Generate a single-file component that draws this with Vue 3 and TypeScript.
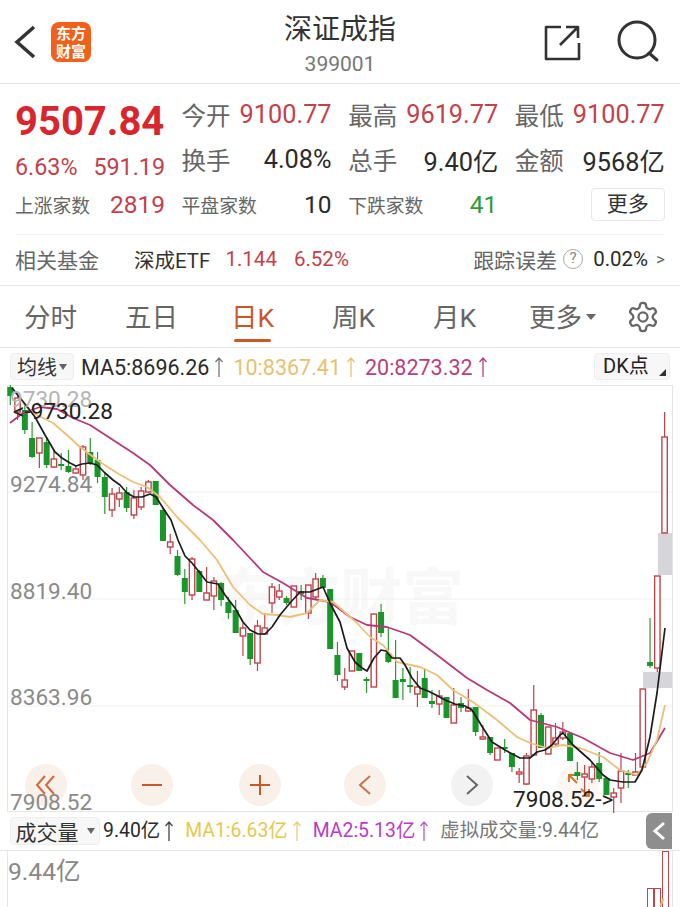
<script setup lang="ts">
import { computed } from 'vue'

type Candle = ['r' | 'g', number, number, number, number]

// wick top, body top, body bottom, wick bottom (page y)
const candles: Candle[] = [
  ['g', 385, 387, 396, 405], ['r', 392, 398, 412, 420], ['g', 405, 410, 430, 434], ['g', 422, 438, 457, 458],
  ['r', 438, 438, 453, 468], ['g', 437, 442, 465, 468], ['r', 450, 459, 467, 468], ['g', 453, 464, 466, 470],
  ['g', 450, 466, 472, 473], ['r', 465, 469, 473, 474], ['r', 445, 447, 475, 480], ['g', 438, 452, 463, 465],
  ['g', 452, 460, 477, 483], ['g', 472, 477, 497, 514], ['r', 488, 494, 510, 517], ['r', 487, 493, 499, 507],
  ['g', 487, 492, 508, 512], ['r', 490, 498, 515, 519], ['r', 487, 491, 507, 510], ['r', 480, 482, 492, 493],
  ['g', 481, 481, 505, 505], ['g', 508, 510, 541, 541], ['r', 534, 542, 547, 554], ['g', 550, 556, 575, 576],
  ['g', 569, 578, 592, 604], ['r', 557, 559, 595, 600], ['g', 570, 571, 592, 592], ['r', 567, 593, 600, 600],
  ['r', 577, 581, 596, 610], ['g', 582, 583, 600, 606], ['g', 597, 602, 613, 619], ['g', 600, 610, 633, 633],
  ['r', 623, 628, 636, 656], ['g', 633, 633, 659, 665], ['r', 620, 626, 663, 671], ['r', 613, 628, 634, 635],
  ['r', 583, 587, 603, 613], ['r', 584, 591, 597, 600], ['g', 596, 598, 603, 605], ['r', 586, 586, 607, 607],
  ['g', 585, 591, 594, 600], ['r', 585, 585, 613, 619], ['r', 573, 579, 597, 600], ['g', 575, 578, 588, 588],
  ['g', 589, 589, 649, 649], ['g', 642, 655, 675, 681], ['r', 668, 680, 687, 690], ['r', 651, 651, 671, 671],
  ['g', 653, 653, 671, 671], ['g', 677, 679, 681, 693], ['r', 614, 614, 687, 687], ['g', 604, 612, 633, 637],
  ['g', 628, 653, 662, 663], ['g', 640, 680, 698, 698], ['g', 668, 679, 682, 700], ['g', 667, 685, 686, 693],
  ['r', 671, 687, 694, 707], ['g', 668, 678, 698, 698], ['g', 690, 701, 704, 708], ['r', 690, 696, 704, 715],
  ['g', 697, 697, 718, 718], ['r', 688, 705, 723, 723], ['g', 697, 703, 708, 712], ['r', 689, 708, 711, 712],
  ['g', 707, 707, 732, 736], ['r', 725, 737, 739, 740], ['g', 737, 737, 753, 755], ['r', 748, 748, 760, 760],
  ['g', 739, 747, 749, 753], ['g', 753, 753, 767, 772], ['r', 768, 772, 774, 783], ['r', 753, 756, 784, 785],
  ['r', 685, 710, 755, 755], ['g', 713, 715, 748, 748], ['r', 727, 727, 754, 754], ['r', 723, 738, 744, 747],
  ['r', 722, 732, 738, 740], ['g', 733, 733, 761, 761], ['g', 762, 772, 776, 780], ['r', 765, 774, 777, 795],
  ['r', 763, 767, 779, 783], ['g', 752, 763, 779, 782], ['g', 778, 778, 795, 795], ['r', 788, 793, 797, 813],
  ['r', 753, 771, 788, 803], ['g', 770, 773, 774, 788], ['r', 753, 772, 775, 775], ['r', 689, 689, 767, 767],
  ['g', 618, 662, 666, 668], ['r', 576, 576, 668, 672], ['r', 412, 437, 533, 533],
]

const bars = computed(() =>
  candles.map((c, i) => ({
    x: 10.3 + i * 7.27,
    up: c[0] === 'r',
    wickTop: c[1],
    top: c[2],
    bottom: Math.max(c[3], c[2] + 2),
    wickBottom: c[4],
  })),
)

const ma5 = '12,388 25,404 35,417 45,435 55,452 62,458 70,463 76,466 82,464 90,463 97,465 105,473 113,480 120,485 127,493 134,497 142,497 150,494 156,497 163,508 171,520 178,540 185,556 192,563 200,573 207,582 218,584 225,595 235,608 243,622 250,630 258,634 265,634 272,627 280,615 290,603 300,592 310,592 323,587 331,605 340,622 347,648 355,662 362,668 367,671 374,658 381,650 386,651 392,658 400,658 405,665 412,678 420,688 428,691 436,695 445,700 455,704 465,706 472,710 483,728 492,742 505,750 520,758 530,758 537,752 545,750 552,745 560,735 563,733 573,745 590,760 603,775 610,780 623,782 635,782 642,770 650,737 657,693 665,628'
const ma10 = '23,403 33,413 53,423 67,435 80,447 100,462 117,473 133,482 147,487 160,497 177,517 200,540 217,560 233,587 250,605 263,614 277,615 290,617 307,613 320,600 333,602 340,608 357,623 370,637 383,645 397,662 420,667 437,675 453,690 473,702 497,720 517,737 530,743 547,748 563,745 580,748 603,757 620,770 637,775 647,763 657,740 665,705'
const ma20 = '10,423 23,413 40,407 57,409 73,418 90,425 110,438 133,453 150,465 170,485 193,505 213,520 233,540 263,572 283,583 307,598 330,602 350,617 367,625 387,627 410,635 437,655 467,678 487,690 510,703 530,720 557,727 583,738 610,753 633,760 650,753 665,728'

const axisLabels = [
  { text: '9274.84', y: 492 },
  { text: '8819.40', y: 599 },
  { text: '8363.96', y: 705 },
  { text: '7908.52', y: 810 },
]
const gridLines = [492, 599, 706]

const tabs = ['分时', '五日', '日K', '周K', '月K']

const stats = [
  { label: '今开', value: '9100.77', red: true },
  { label: '最高', value: '9619.77', red: true },
  { label: '最低', value: '9100.77', red: true },
  { label: '换手', value: '4.08%', red: false },
  { label: '总手', value: '9.40亿', red: false },
  { label: '金额', value: '9568亿', red: false },
]
</script>

<template>
  <div class="page">
    <header class="top">
      <svg class="back" width="24" height="40" viewBox="0 0 24 40">
        <path d="M20 3 L3 18 L20 33" fill="none" stroke="#333" stroke-width="3.5" />
      </svg>
      <div class="logo">东方<br />财富</div>
      <div class="title">
        <div class="name">深证成指</div>
        <div class="code">399001</div>
      </div>
      <svg class="share" width="38" height="38" viewBox="0 0 38 38">
        <path
          d="M17 3 H2 V35 H35 V19 M16 21 L34 3 M22 3 H34 V14"
          fill="none"
          stroke="#333"
          stroke-width="2.6"
          stroke-linejoin="round"
        />
      </svg>
      <svg class="search" width="46" height="46" viewBox="0 0 46 46">
        <circle cx="21" cy="21" r="18" fill="none" stroke="#333" stroke-width="3" />
        <path d="M33 34 L41 41" fill="none" stroke="#333" stroke-width="3" stroke-linecap="round" />
      </svg>
    </header>

    <section class="quote">
      <div class="grid">
        <div class="price">9507.84</div>
        <div v-for="s in stats.slice(0, 3)" :key="s.label" class="stat">
          <span class="label">{{ s.label }}</span>
          <span :class="s.red ? 'red' : 'dark'">{{ s.value }}</span>
        </div>
        <div class="change red"><span>6.63%</span><span>591.19</span></div>
        <div v-for="s in stats.slice(3)" :key="s.label" class="stat">
          <span class="label">{{ s.label }}</span>
          <span :class="s.red ? 'red' : 'dark'">{{ s.value }}</span>
        </div>
        <div class="stat small"><span class="label">上涨家数</span><span class="red">2819</span></div>
        <div class="stat small"><span class="label">平盘家数</span><span class="dark">10</span></div>
        <div class="stat small"><span class="label">下跌家数</span><span class="green">41</span></div>
        <div class="more-cell"><button class="more">更多</button></div>
      </div>
      <div class="fund">
        <span class="label">相关基金</span>
        <span class="fund-name">深成ETF</span>
        <span class="red fund-val">1.144</span>
        <span class="red fund-pct">6.52%</span>
        <span class="label track">跟踪误差</span>
        <span class="help">?</span>
        <span class="dark">0.02%</span>
        <span class="gt">&gt;</span>
      </div>
    </section>

    <nav class="tabs">
      <div v-for="t in tabs" :key="t" class="tab" :class="{ active: t === '日K' }">{{ t }}</div>
      <div class="tab">更多<i class="caret tab-caret"></i></div>
      <svg class="gear" width="34" height="34" viewBox="0 0 24 24">
        <path
          d="M12.22 2h-.44a2 2 0 0 0-2 2v.18a2 2 0 0 1-1 1.73l-.43.25a2 2 0 0 1-2 0l-.15-.08a2 2 0 0 0-2.73.73l-.22.38a2 2 0 0 0 .73 2.73l.15.1a2 2 0 0 1 1 1.72v.51a2 2 0 0 1-1 1.74l-.15.09a2 2 0 0 0-.73 2.73l.22.38a2 2 0 0 0 2.73.73l.15-.08a2 2 0 0 1 2 0l.43.25a2 2 0 0 1 1 1.73V20a2 2 0 0 0 2 2h.44a2 2 0 0 0 2-2v-.18a2 2 0 0 1 1-1.73l.43-.25a2 2 0 0 1 2 0l.15.08a2 2 0 0 0 2.73-.73l.22-.39a2 2 0 0 0-.73-2.73l-.15-.08a2 2 0 0 1-1-1.74v-.5a2 2 0 0 1 1-1.74l.15-.09a2 2 0 0 0 .73-2.73l-.22-.38a2 2 0 0 0-2.73-.73l-.15.08a2 2 0 0 1-2 0l-.43-.25a2 2 0 0 1-1-1.73V4a2 2 0 0 0-2-2z"
          fill="none"
          stroke="#666"
          stroke-width="1.6"
        />
        <circle cx="12" cy="12" r="3.2" fill="none" stroke="#666" stroke-width="1.6" />
      </svg>
    </nav>

    <div class="ma-row">
      <div class="pick">均线<i class="caret small-caret"></i></div>
      <span class="ma ma-black">MA5:8696.26</span>
      <svg class="up" width="10" height="22" viewBox="0 0 10 22"><path d="M5 21 V2 M1.5 6 L5 2 L8.5 6" fill="none" stroke="#777" stroke-width="1.3" /></svg>
      <span class="ma ma-gold">10:8367.41</span>
      <svg class="up" width="10" height="22" viewBox="0 0 10 22"><path d="M5 21 V2 M1.5 6 L5 2 L8.5 6" fill="none" stroke="#e8c170" stroke-width="1.3" /></svg>
      <span class="ma ma-pink">20:8273.32</span>
      <svg class="up" width="10" height="22" viewBox="0 0 10 22"><path d="M5 21 V2 M1.5 6 L5 2 L8.5 6" fill="none" stroke="#b8407f" stroke-width="1.3" /></svg>
      <div class="dk">DK点<i class="corner"></i></div>
    </div>

    <div class="chart">
      <div class="watermark">东方财富</div>
      <div class="round warm" style="left: 25px">
        <svg width="28" height="24" viewBox="0 0 28 24"><path d="M13 3 L5 12 L13 21 M22 3 L14 12 L22 21" fill="none" stroke="#cf6a3c" stroke-width="2" /></svg>
      </div>
      <div class="round warm" style="left: 131px">
        <svg width="24" height="24" viewBox="0 0 24 24"><path d="M2 12 H22" fill="none" stroke="#c8582a" stroke-width="2" /></svg>
      </div>
      <div class="round warm" style="left: 239px">
        <svg width="24" height="24" viewBox="0 0 24 24"><path d="M2 12 H22 M12 2 V22" fill="none" stroke="#c8582a" stroke-width="2" /></svg>
      </div>
      <div class="round warm" style="left: 344px">
        <svg width="24" height="24" viewBox="0 0 24 24"><path d="M17 3 L7 12 L17 21" fill="none" stroke="#c9724a" stroke-width="2" /></svg>
      </div>
      <div class="round cool" style="left: 451px">
        <svg width="24" height="24" viewBox="0 0 24 24"><path d="M7 3 L17 12 L7 21" fill="none" stroke="#666" stroke-width="2" /></svg>
      </div>
      <div class="round faint" style="left: 557px">
        <svg width="42" height="42" viewBox="0 0 42 42">
          <path d="M20 19 L12 11 M12 18 V11 H19 M24 25 L32 32 M25 32 H32 V25" fill="none" stroke="#d9742f" stroke-width="2" />
        </svg>
      </div>

      <svg class="plot" width="680" height="427" viewBox="0 385 680 427">
        <rect x="7.5" y="385.5" width="665" height="426" fill="none" stroke="#e6e6e8" />
        <line v-for="y in gridLines" :key="y" x1="8" x2="672" :y1="y" :y2="y" stroke="#f0f0f0" />
        <rect x="658" y="533" width="14" height="42" fill="#d6d6da" />
        <rect x="643" y="672" width="29" height="16" fill="#d6d6da" />

        <g v-for="(b, i) in bars" :key="i">
          <line
            :x1="b.x"
            :x2="b.x"
            :y1="b.wickTop"
            :y2="b.wickBottom"
            :stroke="b.up ? '#b8454c' : '#2a9a30'"
            stroke-width="1.2"
          />
          <rect
            v-if="b.up"
            :x="b.x - 2.7"
            :y="b.top"
            width="5.4"
            :height="b.bottom - b.top"
            fill="#fff"
            stroke="#c0444c"
            stroke-width="1.4"
          />
          <rect v-else :x="b.x - 3" :y="b.top" width="6" :height="b.bottom - b.top" fill="#18962a" />
        </g>

        <polyline :points="ma20" fill="none" stroke="#b8387c" stroke-width="1.8" stroke-linejoin="round" />
        <polyline :points="ma10" fill="none" stroke="#ecc077" stroke-width="1.8" stroke-linejoin="round" />
        <polyline :points="ma5" fill="none" stroke="#1c1c1c" stroke-width="1.7" stroke-linejoin="round" />

        <text x="10" y="407" class="axis axis-top">9730.28</text>
        <text v-for="l in axisLabels" :key="l.text" x="10" :y="l.y" class="axis">{{ l.text }}</text>
        <text x="13" y="419" class="mark">&lt;-9730.28</text>
        <text x="513" y="807" class="mark">7908.52-&gt;</text>
      </svg>
    </div>

    <div class="vol-row">
      <div class="pick vol-pick">成交量<i class="caret small-caret"></i></div>
      <span class="vol dark">9.40亿</span>
      <svg class="up" width="10" height="22" viewBox="0 0 10 22"><path d="M5 21 V2 M1.5 6 L5 2 L8.5 6" fill="none" stroke="#444" stroke-width="1.3" /></svg>
      <span class="vol vol-gold">MA1:6.63亿</span>
      <svg class="up" width="10" height="22" viewBox="0 0 10 22"><path d="M5 21 V2 M1.5 6 L5 2 L8.5 6" fill="none" stroke="#e6cf7a" stroke-width="1.3" /></svg>
      <span class="vol vol-purple">MA2:5.13亿</span>
      <svg class="up" width="10" height="22" viewBox="0 0 10 22"><path d="M5 21 V2 M1.5 6 L5 2 L8.5 6" fill="none" stroke="#b85cc8" stroke-width="1.3" /></svg>
      <span class="vol vol-grey">虚拟成交量:9.44亿</span>
      <div class="collapse">
        <svg width="14" height="20" viewBox="0 0 14 20"><path d="M12 2 L3 10 L12 18" fill="none" stroke="#fff" stroke-width="3" /></svg>
      </div>
    </div>

    <div class="vol-chart">
      <span class="vol-axis">9.44亿</span>
      <i class="vbar" style="left: 647px; top: 37px"></i>
      <i class="vbar" style="left: 654px; top: 37px"></i>
      <i class="vbar" style="left: 662px; top: 0"></i>
      <i class="vtick"></i>
    </div>
  </div>
</template>

<style scoped>
.page {
  width: 680px;
  height: 907px;
  overflow: hidden;
  background: #fff;
  color: #222;
  font-family: Roboto, 'Noto Sans CJK SC', sans-serif;
}

.top {
  position: relative;
  height: 83px;
  display: flex;
  align-items: center;
  border-bottom: 1px solid #e4e4e4;
}
.back {
  margin: 5px 0 0 14px;
}
.logo {
  width: 40px;
  height: 40px;
  margin-left: 13px;
  border-radius: 8px;
  background: #f2601a;
  color: #fff;
  font-family: 'Noto Sans CJK SC', sans-serif;
  font-weight: 700;
  font-size: 15px;
  line-height: 18px;
  text-align: center;
  padding-top: 2px;
  box-sizing: border-box;
}
.title {
  position: absolute;
  left: 140px;
  right: 140px;
  top: 10px;
  text-align: center;
}
.name {
  font-size: 28px;
  line-height: 40px;
  color: #333;
}
.code {
  font-size: 21px;
  line-height: 28px;
  color: #777;
}
.share {
  margin-left: auto;
  margin-top: 3px;
}
.search {
  margin: 1px 18px 0 34px;
}

.quote {
  border-bottom: 1px solid #e8e8e8;
  padding: 8px 15px 0;
  height: 193px;
}
.grid {
  display: grid;
  grid-template-columns: repeat(4, 150px);
  column-gap: 16.6px;
  grid-auto-rows: 45px;
  align-items: center;
  padding-bottom: 7px;
  border-bottom: 1px solid #f2f2f2;
}
.price {
  font-size: 40px;
  font-weight: 700;
  color: #d8262f;
  padding-top: 14px;
  white-space: nowrap;
}
.change {
  display: flex;
  justify-content: space-between;
  font-size: 23.3px;
  padding-top: 14px;
}
.stat {
  display: flex;
  justify-content: space-between;
  align-items: center;
  font-size: 25.3px;
  white-space: nowrap;
}
.label {
  color: #666;
  font-size: 24.5px;
}
.red {
  color: #c4404a;
}
.dark {
  color: #2a2a2a;
}
.green {
  color: #2e9a35;
  margin-right: 1px;
}
.small {
  font-size: 24.5px;
}
.small .label {
  font-size: 18.8px;
}
.more-cell {
  display: flex;
  justify-content: flex-end;
}
.more {
  width: 74px;
  height: 33px;
  border: 1px solid #e8e8e8;
  border-radius: 4px;
  background: #fff;
  color: #333;
  font-family: inherit;
  font-size: 21px;
  line-height: 1;
  padding: 0;
}
.fund {
  height: 47px;
  display: flex;
  align-items: center;
  font-size: 20.5px;
  white-space: nowrap;
}
.fund .label {
  font-size: 21px;
}
.fund-name {
  margin-left: 35px;
  color: #333;
}
.fund-val {
  margin-left: 15px;
}
.fund-pct {
  margin-left: 17px;
}
.track {
  margin-left: auto;
}
.help {
  width: 20px;
  height: 20px;
  margin: 0 10px 0 6px;
  border: 1.5px solid #aaa;
  border-radius: 50%;
  box-sizing: border-box;
  color: #888;
  font-size: 15px;
  line-height: 17px;
  text-align: center;
}
.gt {
  margin-left: 8px;
  font-size: 17px;
  color: #666;
}

.tabs {
  position: relative;
  height: 61px;
  display: flex;
  border-bottom: 1px solid #e4e4e4;
}
.tab {
  width: 101px;
  text-align: center;
  font-size: 26.5px;
  line-height: 64px;
  color: #666;
  position: relative;
}
.tab.active {
  color: #c8582a;
}
.tab.active::after {
  content: '';
  position: absolute;
  left: 32px;
  width: 37px;
  bottom: 5px;
  height: 3px;
  border-radius: 2px;
  background: #c8582a;
}
.caret {
  display: inline-block;
  width: 0;
  height: 0;
  margin-left: 4px;
  vertical-align: 4px;
  border-left: 4.5px solid transparent;
  border-right: 4.5px solid transparent;
  border-top: 6px solid #666;
}
.tab-caret {
  position: absolute;
  left: 81px;
  top: 28px;
  margin: 0;
  border-left-width: 5px;
  border-right-width: 5px;
}
.gear {
  position: absolute;
  left: 626px;
  top: 14px;
}

.ma-row {
  height: 37px;
  display: flex;
  align-items: center;
  padding: 0 10px;
  font-size: 21.5px;
  white-space: nowrap;
}
.pick {
  height: 27px;
  width: 64px;
  display: flex;
  align-items: center;
  justify-content: center;
  background: #f7f7f7;
  border: 1px solid #eee;
  border-radius: 4px;
  box-sizing: border-box;
  font-size: 20px;
  color: #333;
}
.small-caret {
  margin-left: 2px;
  vertical-align: 0;
}
.ma {
  line-height: 29px;
  padding-top: 2px;
}
.ma-black {
  margin-left: 7px;
  color: #2a2a2a;
}
.ma-gold {
  margin-left: 9px;
  color: #e8c170;
}
.ma-pink {
  margin-left: 9px;
  color: #b8407f;
}
.up {
  margin-left: 5px;
  flex: none;
}
.dk {
  position: relative;
  margin-left: auto;
  width: 76px;
  height: 27px;
  background: #f7f7f7;
  border: 1px solid #eee;
  border-radius: 4px;
  box-sizing: border-box;
  color: #222;
  font-size: 20px;
  line-height: 25px;
  padding-left: 8px;
}
.corner {
  position: absolute;
  right: 3px;
  bottom: 3px;
  width: 0;
  height: 0;
  border-left: 7px solid transparent;
  border-bottom: 7px solid #333;
}

.chart {
  position: relative;
  height: 427px;
}
.plot {
  position: absolute;
  left: 0;
  top: 0;
  overflow: visible;
}
.watermark {
  position: absolute;
  left: 216px;
  top: 172px;
  font-family: 'Noto Sans CJK SC', sans-serif;
  font-size: 62px;
  line-height: 72px;
  font-weight: 700;
  color: #f8f8f8;
  white-space: nowrap;
}
.round {
  position: absolute;
  top: 379px;
  width: 42px;
  height: 42px;
  border-radius: 50%;
  display: flex;
  align-items: center;
  justify-content: center;
}
.warm {
  background: #faf0ea;
}
.cool {
  background: #f2f2f2;
}
.faint {
  background: #fcf7f3;
}
.axis {
  font-size: 22.6px;
  fill: #8a8a8a;
}
.axis-top {
  fill: #b5b5b5;
}
.mark {
  font-size: 22.6px;
  fill: #222;
}

.vol-row {
  position: relative;
  height: 38px;
  display: flex;
  align-items: center;
  padding-left: 10px;
  border-bottom: 1px solid #e4e4e4;
  font-size: 19.4px;
  white-space: nowrap;
}
.vol-pick {
  width: 90px;
  height: 28px;
  font-size: 21px;
}
.vol-pick .small-caret {
  margin-left: 8px;
}
.vol {
  line-height: 28px;
}
.vol-row .dark {
  margin-left: 3px;
}
.vol-row .up {
  margin-left: 4px;
}
.vol-gold {
  margin-left: 11px;
  color: #e6c84e;
}
.vol-purple {
  margin-left: 11px;
  color: #b83cc8;
}
.vol-grey {
  margin-left: 11px;
  color: #777;
}
.collapse {
  position: absolute;
  left: 646px;
  top: 1px;
  width: 26px;
  height: 36px;
  border-radius: 6px 0 0 6px;
  background: #8e8e8e;
  display: flex;
  align-items: center;
  justify-content: center;
}

.vol-chart {
  position: relative;
  height: 56px;
  overflow: hidden;
}
.vol-chart::before {
  content: '';
  position: absolute;
  left: 7px;
  top: 0;
  bottom: 0;
  width: 1px;
  background: #e6e6e8;
}
.vol-chart::after {
  content: '';
  position: absolute;
  left: 672px;
  top: 0;
  bottom: 0;
  width: 1px;
  background: #e6e6e8;
}
.vol-axis {
  position: absolute;
  left: 8px;
  top: 7px;
  font-size: 24.6px;
  line-height: 28px;
  color: #888;
}
.vbar {
  position: absolute;
  width: 7px;
  height: 60px;
  border: 1.5px solid #c0444c;
  box-sizing: border-box;
}
.vtick {
  position: absolute;
  left: 661px;
  top: 47px;
  width: 1.5px;
  height: 8px;
  background: #e8c170;
  transform: rotate(25deg);
}
</style>

<style>
html,
body {
  margin: 0;
  background: #fff;
}
</style>
